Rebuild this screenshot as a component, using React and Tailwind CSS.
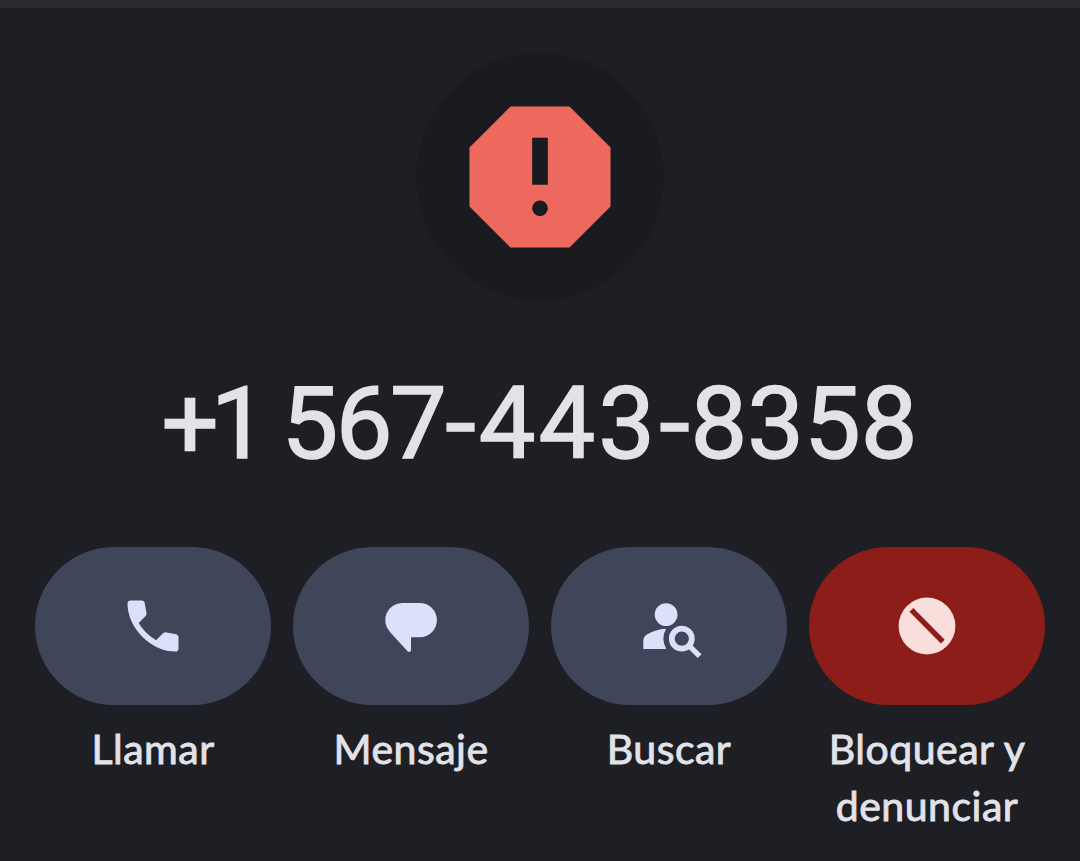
function ReportIcon() {
  return (
    <svg viewBox="0 0 24 24" className="h-[188px] w-[188px]" aria-hidden="true">
      <path
        fill="#ed685d"
        fillRule="evenodd"
        d="M8.23 3h7.54L21 8.23v7.54L15.77 21H8.23L3 15.77V8.23L8.23 3zM11 7v6h2V7h-2zM12 15a1 1 0 1 0 0 2 1 1 0 0 0 0-2z"
      />
    </svg>
  );
}

function CallIcon() {
  return (
    <svg viewBox="0 -960 960 960" className="h-[68px] w-[68px]" fill="currentColor" aria-hidden="true">
      <path d="M798-120q-125 0-247-54.5T329-329Q229-429 174.5-551T120-798q0-18 12-30t30-12h162q14 0 25 9.5t13 22.5l26 140q2 16-1 27t-11 19l-97 98q20 37 47.5 71.5T387-386q31 31 65 57.5t72 48.5l94-94q9-9 23.5-13.5T670-390l138 28q14 4 23 14.5t9 23.5v162q0 18-12 30t-30 12Z" />
    </svg>
  );
}

function MessageIcon() {
  return (
    <svg viewBox="377 592 68 68" className="h-[68px] w-[68px]" fill="currentColor" aria-hidden="true">
      <path d="M402.6 603h17.2a17.1 17.1 0 0 1 0 34.2H411v12.9q0 2-1.8 2-1 0-1.9-1L390.4 632.4A17.1 17.1 0 0 1 402.6 603z" />
    </svg>
  );
}

function PersonSearchIcon() {
  return (
    <svg viewBox="635 592 68 68" className="h-[68px] w-[68px]" fill="currentColor" aria-hidden="true">
      <circle cx="666.1" cy="614.6" r="11.4" />
      <path d="M643.3 649v-8.3q0-4.2 3.6-6.3 8.5-5 19.2-5.6-5.5 9.8.2 20.2z" />
      <circle cx="681.8" cy="638.7" r="10" fill="none" stroke="currentColor" strokeWidth="5.8" />
      <path d="M689 645.6l10.6 10.6" stroke="currentColor" strokeWidth="5.2" />
    </svg>
  );
}

function BlockIcon() {
  return (
    <svg viewBox="893 592 68 68" className="h-[68px] w-[68px]" aria-hidden="true">
      <circle cx="927" cy="626" r="28.4" fill="#fadedb" />
      <path d="M911.4 609.9l31.4 31.8" stroke="#8c1d18" strokeWidth="5.4" />
    </svg>
  );
}

const numberParts = [
  { text: '+1', className: 'mr-[22px] w-[98px] tracking-[-8px]' },
  { text: '567', className: 'w-[163px] tracking-[-2.5px]' },
  { text: '-', className: 'w-[31px] scale-x-110' },
  { text: '443', className: 'ml-[3px] w-[180px] tracking-[3px]' },
  { text: '-', className: 'w-[31px] scale-x-110' },
  { text: '8358', className: 'w-[229px]' },
];

const actions = [
  { label: 'Llamar', icon: CallIcon },
  { label: 'Mensaje', icon: MessageIcon },
  { label: 'Buscar', icon: PersonSearchIcon },
  { label: 'Bloquear y denunciar', icon: BlockIcon, danger: true },
];

function ActionButton({ label, icon: Icon, danger }) {
  return (
    <button type="button" className="flex flex-col items-center">
      <span
        className={`flex h-[158px] w-full items-center justify-center rounded-full text-[#dce1fb] ${
          danger ? 'bg-[#8c1d18]' : 'bg-[#404659]'
        }`}
      >
        <Icon />
      </span>
      <span className="mt-[15px] px-4 text-center text-[41px] leading-[57px] tracking-[0.5px] text-[#e2e2e9] [-webkit-text-stroke:0.9px_#e2e2e9]">
        {label}
      </span>
    </button>
  );
}

export default function App() {
  return (
    <div className="h-[861px] w-[1080px] overflow-hidden border-t-8 border-[#292a2f] bg-[#1e1f25] font-['Lato',sans-serif]">
      <div className="mx-auto mt-[45px] flex h-[248px] w-[248px] items-center justify-center rounded-full bg-[#1a1b20]">
        <ReportIcon />
      </div>

      <h1 className="mt-[63px] flex h-[120px] items-baseline justify-center font-['Roboto',sans-serif] text-[101px] leading-[120px] text-[#e2e2e9] [-webkit-text-stroke:1.5px_#e2e2e9]">
        {numberParts.map((p, i) => (
          <span key={i} className={`flex shrink-0 justify-center ${p.className}`}>
            {p.text}
          </span>
        ))}
      </h1>

      <div className="mt-[63px] grid grid-cols-4 gap-[22px] px-[35px]">
        {actions.map((a) => (
          <ActionButton key={a.label} {...a} />
        ))}
      </div>
    </div>
  );
}
